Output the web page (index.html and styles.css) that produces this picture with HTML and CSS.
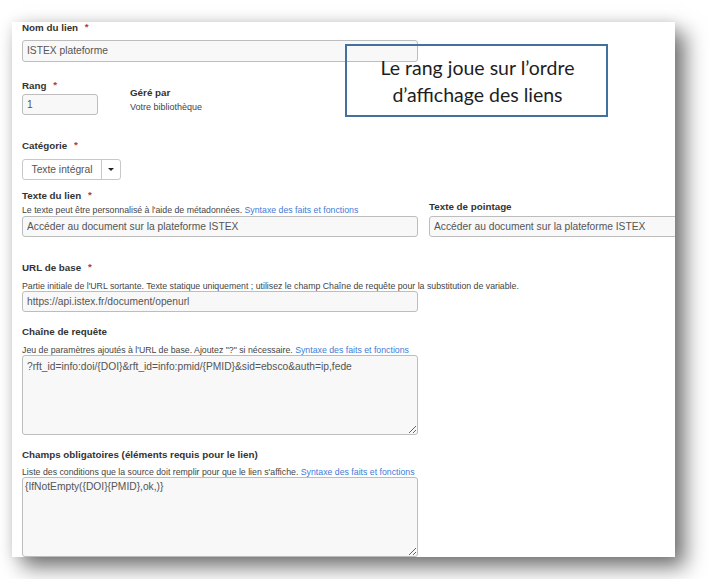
FILE: index.html
```html
<!DOCTYPE html>
<html lang="fr">
<head>
<meta charset="utf-8">
<title>Lien</title>
<link rel="stylesheet" href="styles.css">
</head>
<body>
<div class="panel">
  <div class="field">
    <div class="label">Nom du lien <span class="req">*</span></div>
    <input class="input wide gap6" type="text" value="ISTEX plateforme" readonly>
  </div>

  <div class="row rang-row">
    <div class="field">
      <div class="label">Rang <span class="req">*</span></div>
      <input class="input small gap2" type="text" value="1" readonly>
    </div>
    <div class="managed">
      <div class="label">Géré par</div>
      <div class="managed-value">Votre bibliothèque</div>
    </div>
  </div>

  <div class="field cat-field">
    <div class="label">Catégorie <span class="req">*</span></div>
    <div class="select">
      <span class="select-text">Texte intégral</span>
      <span class="select-caret"></span>
    </div>
  </div>

  <div class="cols text-row">
    <div class="field">
      <div class="label">Texte du lien <span class="req">*</span></div>
      <div class="help help-tight">Le texte peut être personnalisé à l'aide de métadonnées. <a class="link" href="#">Syntaxe des faits et fonctions</a></div>
      <input class="input wide" type="text" value="Accéder au document sur la plateforme ISTEX" readonly>
    </div>
    <div class="field col-end">
      <div class="label">Texte de pointage</div>
      <input class="input wide gap2-5" type="text" value="Accéder au document sur la plateforme ISTEX" readonly>
    </div>
  </div>

  <div class="field url-field">
    <div class="label">URL de base <span class="req">*</span></div>
    <div class="help">Partie initiale de l'URL sortante. Texte statique uniquement ; utilisez le champ Chaîne de requête pour la substitution de variable.</div>
    <input class="input wide" type="text" value="https://api.istex.fr/document/openurl" readonly>
  </div>

  <div class="field block-field">
    <div class="label">Chaîne de requête</div>
    <div class="help">Jeu de paramètres ajoutés à l'URL de base. Ajoutez "?" si nécessaire. <a class="link" href="#">Syntaxe des faits et fonctions</a></div>
    <textarea class="area area-query" readonly>?rft_id=info:doi/{DOI}&amp;rft_id=info:pmid/{PMID}&amp;sid=ebsco&amp;auth=ip,fede</textarea>
  </div>

  <div class="field block-field">
    <div class="label">Champs obligatoires (éléments requis pour le lien)</div>
    <div class="help">Liste des conditions que la source doit remplir pour que le lien s'affiche. <a class="link" href="#">Syntaxe des faits et fonctions</a></div>
    <textarea class="area area-req" readonly>{IfNotEmpty({DOI}{PMID},ok,)}</textarea>
  </div>
</div>

<div class="callout">
  <span>Le rang joue sur l’ordre</span>
  <span>d’affichage des liens</span>
</div>
</body>
</html>
```

FILE: styles.css
```css
html, body {
  margin: 0;
  padding: 0;
  background: #ffffff;
}

body {
  font-family: "Liberation Sans", Arial, sans-serif;
  color: #333;
  width: 709px;
  height: 579px;
  overflow: hidden;
  position: relative;
}

.panel {
  margin: 22px 0 0 12px;
  width: 663px;
  height: 535px;
  box-sizing: border-box;
  padding: 0 0 0 10px;
  background: #ffffff;
  overflow: hidden;
  box-shadow: 10px 10px 20px rgba(0, 0, 0, 0.55), 0 0 12px rgba(0, 0, 0, 0.09);
}

.field {
  display: flex;
  flex-direction: column;
  align-items: flex-start;
}

.label {
  font-size: 9.8px;
  font-weight: 700;
  line-height: 12px;
  color: #333;
  white-space: nowrap;
}

.req {
  color: #b0413e;
  margin-left: 4px;
  position: relative;
  top: -1px;
}

.input {
  box-sizing: border-box;
  height: 21.5px;
  margin: 0;
  padding: 0 4px;
  border: 1px solid #bdbdbd;
  border-radius: 3px;
  background: #f8f8f8;
  font-family: "Liberation Sans", Arial, sans-serif;
  font-size: 10.25px;
  color: #555;
  outline: none;
}

.wide { width: 396px; }
.small { width: 76px; }

.gap6 { margin-top: 6px; }
.gap2 { margin-top: 2px; }
.gap2-5 { margin-top: 2.5px; }

.row {
  display: flex;
  align-items: flex-start;
}

.rang-row { margin-top: 18px; }

.managed {
  margin-left: 32px;
  padding-top: 7px;
}

.managed-value {
  font-size: 9px;
  line-height: 12px;
  color: #444;
  margin-top: 2.5px;
}

.cat-field { margin-top: 25px; }

.select {
  margin-top: 6.5px;
  box-sizing: border-box;
  width: 99px;
  height: 21px;
  border: 1px solid #c8c8c8;
  border-radius: 3px;
  background: #fff;
  display: flex;
  align-items: stretch;
}

.select-text {
  width: 78px;
  border-right: 1px solid #c8c8c8;
  font-size: 10.25px;
  color: #555;
  display: flex;
  align-items: center;
  justify-content: center;
}

.select-caret {
  flex: 1;
  display: flex;
  align-items: center;
  justify-content: center;
}

.select-caret::before {
  content: "";
  width: 0;
  height: 0;
  border-left: 3px solid transparent;
  border-right: 3px solid transparent;
  border-top: 3px solid #222;
}

.cols {
  display: grid;
  grid-template-columns: 396px 396px;
  column-gap: 11px;
}

.text-row { margin-top: 10.5px; }

.col-end { justify-content: flex-end; }

.help {
  font-size: 8.75px;
  line-height: 10px;
  color: #444;
  white-space: nowrap;
  margin-top: 6.5px;
}

.help-tight { margin-top: 3px; margin-bottom: 0.5px; }

.link {
  color: #3f7bd8;
  text-decoration: none;
}

.url-field { margin-top: 25px; }

.block-field { margin-top: 14px; }

.area {
  box-sizing: border-box;
  width: 396px;
  height: 80px;
  margin: 0;
  border: 1px solid #bdbdbd;
  border-radius: 3px;
  background: #f8f8f8;
  font-family: "Liberation Sans", Arial, sans-serif;
  font-size: 10.25px;
  line-height: 13px;
  color: #555;
  outline: none;
  overflow: hidden;
}

.area-query { padding: 4px 4px; }
.area-req { padding: 1.5px 2px; }

.callout {
  position: absolute;
  left: 345px;
  top: 44px;
  width: 263px;
  height: 73px;
  box-sizing: border-box;
  border: 2px solid #41719c;
  display: flex;
  flex-direction: column;
  align-items: center;
  justify-content: center;
  font-family: Lato, "Open Sans", sans-serif;
  font-size: 19.5px;
  line-height: 27px;
  color: #1e1e1e;
  padding-left: 2px;
}
```
